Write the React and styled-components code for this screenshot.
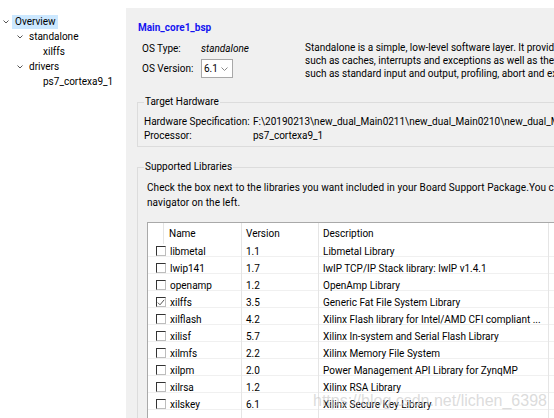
import React from 'react'
import styled, { createGlobalStyle } from 'styled-components'

const GlobalStyle = createGlobalStyle`
  html, body {
    margin: 0;
    padding: 0;
  }
  body {
    background: #f0f0f0;
    font-family: Roboto, "Noto Sans", sans-serif;
    font-size: 10px;
    color: #000;
    overflow: hidden;
  }
`

const Window = styled.div`
  display: flex;
  width: 554px;
  height: 418px;
  overflow: hidden;
  position: relative;
`

const Navigator = styled.nav`
  width: 126px;
  flex: none;
  background: #fff;
  padding-top: 14px;
  box-sizing: border-box;
`

const TreeItem = styled.div`
  display: flex;
  align-items: center;
  height: 15px;
  padding-left: ${p => 3 + p.$depth * 14}px;
  white-space: nowrap;
`

const Twisty = styled.span`
  width: 9px;
  height: 14px;
  flex: none;
  display: flex;
  align-items: center;
`

const TreeLabel = styled.span`
  line-height: 14px;
  padding: 0 2px 0 3px;
  background: ${p => (p.$selected ? '#cce8ff' : 'transparent')};
`

const Editor = styled.main`
  flex: 1;
  min-width: 0;
  border-top: 8px solid #fff;
  padding: 12px 0 0 11px;
  overflow: hidden;
`

const Title = styled.h1`
  margin: 0 0 0 1px;
  font-size: 10px;
  line-height: 16px;
  font-weight: 700;
  color: #1515f0;
`

const Summary = styled.div`
  display: flex;
  margin-top: 5px;
`

const OsGrid = styled.div`
  display: grid;
  grid-template-columns: 59px 1fr;
  grid-template-rows: 14px 19px;
  row-gap: 4px;
  align-items: center;
  width: 163px;
  padding-left: 5px;
  flex: none;
`

const Value = styled.span`
  font-style: ${p => (p.$italic ? 'italic' : 'normal')};
`

const Select = styled.div`
  width: 32px;
  height: 19px;
  box-sizing: border-box;
  border: 1px solid #a8a8a8;
  background: #fff;
  display: flex;
  align-items: center;
  justify-content: space-between;
  padding: 0 4px 0 2px;
`

const Description = styled.div`
  line-height: 13px;
  white-space: nowrap;
`

const Group = styled.fieldset`
  margin: ${p => p.$top}px 0 0 0;
  padding: ${p => p.$pad};
  border: 1px solid #dcdcdc;
  width: 700px;
  min-width: 0;
`

const GroupTitle = styled.legend`
  padding: 0 1px;
  margin-left: ${p => p.$shift || 0}px;
  line-height: 14px;
`

const PropGrid = styled.div`
  display: grid;
  grid-template-columns: 109px 1fr;
  line-height: 14px;
  white-space: nowrap;
`

const Intro = styled.div`
  line-height: 15px;
  white-space: nowrap;
  letter-spacing: 0.08px;
`

const LibTable = styled.div`
  margin-top: 12px;
  background: #fff;
  border: 1px solid #a9a9a9;
  border-right: none;
  width: 690px;
`

const HeaderRow = styled.div`
  display: grid;
  grid-template-columns: 16px 78px 77px 230px 1fr;
  height: 17px;
`

const HeadCell = styled.div`
  box-sizing: border-box;
  border-right: 1px solid #e5e5e5;
  padding-left: ${p => p.$pad || 0}px;
  line-height: 21px;
  white-space: nowrap;
`

const Row = styled.div`
  display: grid;
  grid-template-columns: 94px 77px 230px 1fr;
  height: 17px;
  box-sizing: border-box;
  border-bottom: 1px solid #f0f0f0;
`

const Cell = styled.div`
  box-sizing: border-box;
  border-right: 1px solid #e5e5e5;
  padding-left: ${p => p.$pad || 0}px;
  padding-top: 6px;
  display: flex;
  align-items: flex-start;
  gap: 4px;
  white-space: nowrap;
  line-height: 12px;
`

const CheckBox = styled.span`
  width: 10px;
  height: 10px;
  flex: none;
  box-sizing: border-box;
  border: 1px solid #333;
  border-right-color: #bdbdbd;
  border-bottom-color: #bdbdbd;
  background: #fff;
  display: flex;
  align-items: center;
  justify-content: center;
`

const Watermark = styled.div`
  position: absolute;
  left: 313px;
  top: 392px;
  font-family: "Liberation Sans", Arial, sans-serif;
  font-size: 16px;
  color: rgba(200, 200, 200, 0.65);
  pointer-events: none;
  white-space: nowrap;
`

const Chevron = () => (
  <svg width="6" height="4" viewBox="0 0 6 4">
    <path d="M0.5 0.5 L3 3 L5.5 0.5" fill="none" stroke="#555" strokeWidth="1" />
  </svg>
)

const SelectArrow = () => (
  <svg width="7" height="4" viewBox="0 0 7 4">
    <path d="M0.5 0.5 L3.5 3.5 L6.5 0.5" fill="none" stroke="#888" strokeWidth="1" />
  </svg>
)

const Tick = () => (
  <svg width="8" height="7" viewBox="0 0 8 7">
    <path d="M0.8 3.6 L3 5.8 L7.2 0.8" fill="none" stroke="#555" strokeWidth="1" />
  </svg>
)

const tree = [
  { label: 'Overview', depth: 0, open: true, selected: true },
  { label: 'standalone', depth: 1, open: true },
  { label: 'xilffs', depth: 2 },
  { label: 'drivers', depth: 1, open: true },
  { label: 'ps7_cortexa9_1', depth: 2 },
]

const libraries = [
  ['libmetal', '1.1', 'Libmetal Library'],
  ['lwip141', '1.7', 'lwIP TCP/IP Stack library: lwIP v1.4.1'],
  ['openamp', '1.2', 'OpenAmp Library'],
  ['xilffs', '3.5', 'Generic Fat File System Library', true],
  ['xilflash', '4.2', 'Xilinx Flash library for Intel/AMD CFI compliant ...'],
  ['xilisf', '5.7', 'Xilinx In-system and Serial Flash Library'],
  ['xilmfs', '2.2', 'Xilinx Memory File System'],
  ['xilpm', '2.0', 'Power Management API Library for ZynqMP'],
  ['xilrsa', '1.2', 'Xilinx RSA Library'],
  ['xilskey', '6.1', 'Xilinx Secure Key Library'],
]

const EmptyRow = () => (
  <Row>
    <Cell />
    <Cell />
    <Cell />
    <Cell />
  </Row>
)

export default function App() {
  return (
    <Window>
      <GlobalStyle />
      <Navigator>
        {tree.map(item => (
          <TreeItem key={item.label} $depth={item.depth}>
            <Twisty>{item.open && <Chevron />}</Twisty>
            <TreeLabel $selected={item.selected}>{item.label}</TreeLabel>
          </TreeItem>
        ))}
      </Navigator>

      <Editor>
        <Title>Main_core1_bsp</Title>
        <Summary>
          <OsGrid>
            <span>OS Type:</span>
            <Value $italic>standalone</Value>
            <span>OS Version:</span>
            <Select>
              <span>6.1</span>
              <SelectArrow />
            </Select>
          </OsGrid>
          <Description>
            <div>Standalone is a simple, low-level software layer. It provides access to basic processor features</div>
            <div>such as caches, interrupts and exceptions as well as the basic features of a hosted environment,</div>
            <div>such as standard input and output, profiling, abort and exit.</div>
          </Description>
        </Summary>

        <Group $top={15} $pad="6px 6px 3px 6px">
          <GroupTitle>Target Hardware</GroupTitle>
          <PropGrid>
            <span>Hardware Specification:</span>
            <span>F:\20190213\new_dual_Main0211\new_dual_Main0210\new_dual_Main0210.sdk\design_1_wrapper_hw_platform_0\system.hdf</span>
            <span>Processor:</span>
            <span>ps7_cortexa9_1</span>
          </PropGrid>
        </Group>

        <Group $top={13} $pad="6px 0 0 9px">
          <GroupTitle $shift={-3}>Supported Libraries</GroupTitle>
          <Intro>
            <div>Check the box next to the libraries you want included in your Board Support Package.You can configure a library by clicking on its name in the</div>
            <div>navigator on the left.</div>
          </Intro>
          <LibTable>
            <HeaderRow>
              <HeadCell />
              <HeadCell $pad={5}>Name</HeadCell>
              <HeadCell $pad={4}>Version</HeadCell>
              <HeadCell $pad={4}>Description</HeadCell>
              <HeadCell />
            </HeaderRow>
            {libraries.map(([name, version, desc, checked]) => (
              <Row key={name}>
                <Cell $pad={8}>
                  <CheckBox>{checked && <Tick />}</CheckBox>
                  <span>{name}</span>
                </Cell>
                <Cell $pad={4}>{version}</Cell>
                <Cell $pad={4}>{desc}</Cell>
                <Cell />
              </Row>
            ))}
            <EmptyRow />
            <EmptyRow />
          </LibTable>
        </Group>
      </Editor>

      <Watermark>https://blog.csdn.net/lichen_6398</Watermark>
    </Window>
  )
}
